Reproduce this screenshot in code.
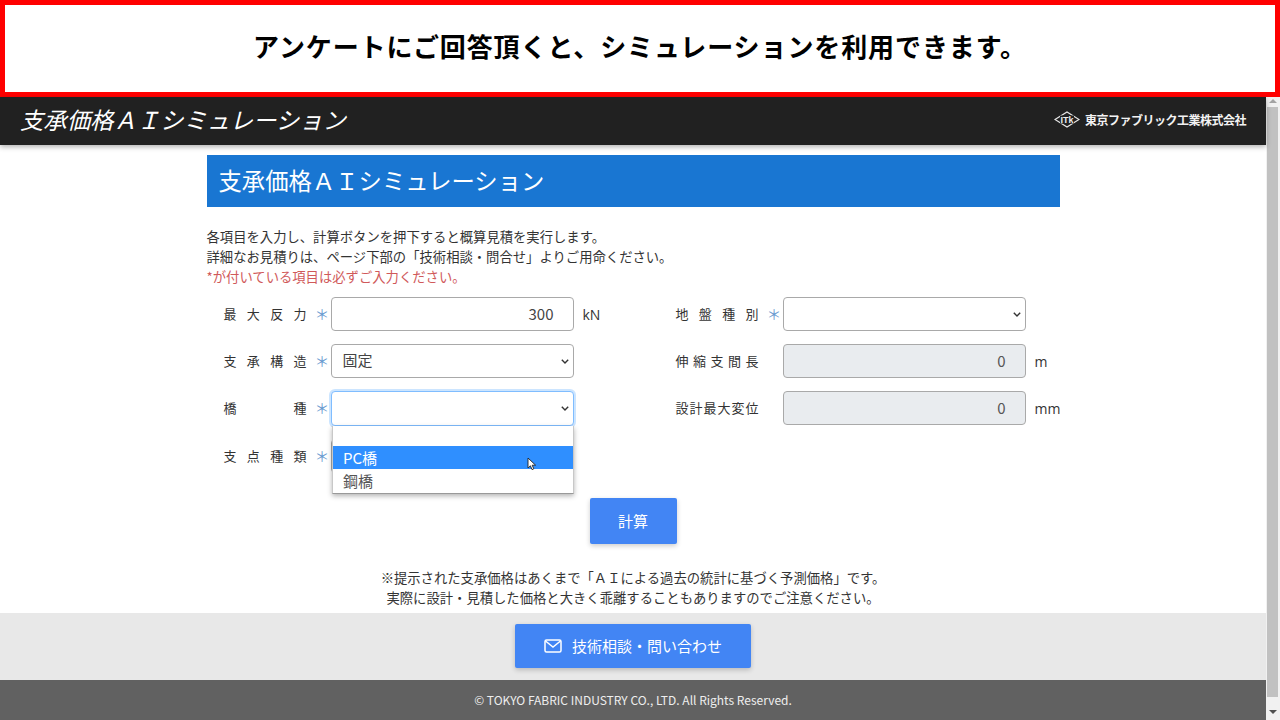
<div class="page">
  <div class="banner"><b>アンケートにご回答頂くと、シミュレーションを利用できます。</b></div>
  <div class="viewport">
    <div class="scroll">
      <header class="topbar">
        <span class="brand">支承価格ＡＩシミュレーション</span>
        <span class="logo">
          <svg width="26" height="17" viewBox="0 0 26 17" aria-hidden="true">
            <path d="M1 8.500 13 1 25 8.500 13 16Z" fill="none" stroke="#e8e8e8" stroke-width="1.200"/>
            <rect x="6" y="4.500" width="14" height="8" fill="#212121"/>
            <text x="13" y="12" text-anchor="middle" class="ftk">ITk</text>
          </svg>
          <span class="company">東京ファブリック工業株式会社</span>
        </span>
      </header>

      <main class="content">
        <h1>支承価格ＡＩシミュレーション</h1>
        <p class="intro">各項目を入力し、計算ボタンを押下すると概算見積を実行します。<br />詳細なお見積りは、ページ下部の「技術相談・問合せ」よりご用命ください。<br /><span class="warn">*が付いている項目は必ずご入力ください。</span></p>

        <div class="form">
          <div class="col">
            <div class="row">
              <span class="label">最大反力</span><span class="star">＊</span>
              <input class="field num" value="300" /><span class="unit">kN</span>
            </div>
            <div class="row">
              <span class="label">支承構造</span><span class="star">＊</span>
              <select class="field"><option>固定</option></select>
            </div>
            <div class="row menu-anchor">
              <span class="label">橋種</span><span class="star">＊</span>
              <select class="field focus"><option></option></select>
              <div class="menu">
                <div class="opt"></div>
                <div class="opt active">PC橋<svg class="cursor" width="10" height="14" viewBox="0 0 10 14"><path d="M1 1v10l2.400-2.200L5 12.600l1.800-.8-1.600-3.600H8.600Z" fill="#fff" stroke="#222" stroke-width=".9"/></svg></div>
                <div class="opt">鋼橋</div>
              </div>
            </div>
            <div class="row">
              <span class="label">支点種類</span><span class="star">＊</span>
              <select class="field"><option></option></select>
            </div>
          </div>
          <div class="col">
            <div class="row">
              <span class="label">地盤種別</span><span class="star">＊</span>
              <select class="field"><option></option></select>
            </div>
            <div class="row">
              <span class="label">伸縮支間長</span><span class="star"></span>
              <input class="field num" disabled value="0" /><span class="unit">m</span>
            </div>
            <div class="row">
              <span class="label">設計最大変位</span><span class="star"></span>
              <input class="field num" disabled value="0" /><span class="unit">mm</span>
            </div>
          </div>
        </div>

        <div class="calc-wrap"><button class="btn calc">計算</button></div>
        <p class="note">※提示された支承価格はあくまで「ＡＩによる過去の統計に基づく予測価格」です。<br />実際に設計・見積した価格と大きく乖離することもありますのでご注意ください。</p>
      </main>

      <section class="contact">
        <button class="btn mail">
          <svg width="18" height="14" viewBox="0 0 18 14" fill="none" stroke="#fff" stroke-width="1.500" aria-hidden="true"><rect x="1" y="1" width="16" height="12" rx="1.500"/><path d="m1.500 2 7.500 6 7.500-6"/></svg>
          技術相談・問い合わせ
        </button>
      </section>
      <footer class="footer">© TOKYO FABRIC INDUSTRY CO., LTD. All Rights Reserved.</footer>
    </div>
    <div class="scrollbar"><span class="arrow up"></span><span class="thumb"></span><span class="arrow down"></span></div>
  </div>
</div>

<style>
  :global(body) { margin: 0; overflow: hidden; background: #fff; }
  .page { width: 1280px; height: 720px; display: flex; flex-direction: column; overflow: hidden; font-family: "Noto Sans CJK JP", "Noto Sans", sans-serif; color: #333; }
  .banner { flex: none; height: 80px; padding-bottom: 7px; box-sizing: content-box; border: 5px solid #f00; display: flex; align-items: center; justify-content: center; background: #fff; font-size: 26px; color: #000; letter-spacing: .9px; }
  .banner b { font-weight: 700; }
  .viewport { flex: 1; display: flex; min-height: 0; }
  .scroll { flex: 1; display: flex; flex-direction: column; min-width: 0; }
  .scrollbar { width: 14px; flex: none; background: #f1f1f1; display: flex; flex-direction: column; align-items: center; }
  .arrow { width: 0; height: 0; border-left: 4px solid transparent; border-right: 4px solid transparent; }
  .up { margin: 2px 0 4px; border-bottom: 4px solid #a3a3a3; }
  .down { margin: 13px 0 0; border-top: 4px solid #505050; }
  .thumb { width: 11px; height: 590px; background: #c1c1c1; align-self: flex-start; margin-left: 1px; }
  .topbar { height: 48px; flex: none; background: #212121; color: #fff; display: flex; align-items: center; justify-content: space-between; padding: 0 20px; box-shadow: 0 2px 5px rgba(0,0,0,.3); position: relative; box-sizing: border-box; }
  .brand { font-size: 23.350px; font-style: italic; font-weight: 400; padding-bottom: 4px; }
  .logo { display: flex; align-items: center; color: #f2f2f2; padding-bottom: 3px; }
  .ftk { font: 700 9px "Liberation Sans", sans-serif; fill: #eee; }
  .company { font-size: 12px; font-weight: 700; margin-left: 5px; letter-spacing: -.5px; }
  .content { width: 853px; margin: 0 auto; flex: none; height: 468px; padding-top: 10px; box-sizing: border-box; }
  h1 { margin: 0; height: 52px; background: #1976d2; color: #fff; font-size: 23.350px; font-weight: 400; line-height: 50px; padding-left: 12px; }
  .intro { margin: 20px 0 0; font-size: 13.330px; line-height: 20px; color: #333; }
  .warn { color: #d0595a; }
  .form { display: flex; margin-top: 10px; height: 201px; }
  .col { width: 469px; flex: none; padding-left: 17px; box-sizing: border-box; }
  .col + .col { width: 384px; padding-left: 0; }
  .row { display: flex; align-items: center; height: 34px; margin-bottom: 13px; font-size: 13px; }
  .menu-anchor { margin-bottom: 14px; position: relative; }
  .label { width: 83px; flex: none; text-align: justify; text-align-last: justify; font-size: 13px; color: #333; padding-bottom: 2px; }
  .star { width: 24px; flex: none; box-sizing: border-box; padding-left: 7px; text-align: center; color: #6a9ad0; font-size: 14.500px; line-height: 34px; }
  .field { width: 243px; height: 34px; box-sizing: border-box; border: 1px solid #a9a9a9; border-radius: 4px; background-color: #fff; font: 400 15px "Noto Sans CJK JP", "Noto Sans", sans-serif; color: #444; flex: none; outline: none; }
  select.field { appearance: none; padding: 0 7px 3px 11px; background-image: url("data:image/svg+xml,%3Csvg xmlns='http://www.w3.org/2000/svg' width='8' height='5' viewBox='0 0 8 5'%3E%3Cpath d='M.8.8 4 4l3.200-3.200' fill='none' stroke='%23333' stroke-width='1.400'/%3E%3C/svg%3E"); background-repeat: no-repeat; background-position: right 4px center; }
  .num { text-align: right; padding: 0 19px 2px 6px; }
  input:disabled { background: #e9ecef; opacity: 1; color: #555; }
  .focus { border-color: #80bdff; box-shadow: 0 0 0 2px rgba(128,189,255,.4); height: 35px; }
  .unit { margin-left: 9px; font-size: 14px; color: #333; font-family: "Open Sans", "Noto Sans", sans-serif; }
  .menu { position: absolute; left: 108.500px; top: 35px; width: 242px; background: #fff; border: 1px solid #c8c8c8; border-top: 0; border-bottom: 1px solid #999; box-shadow: 0 2px 5px rgba(0,0,0,.3); z-index: 2; box-sizing: border-box; }
  .opt { height: 23px; line-height: 23px; padding-left: 10px; font-size: 15px; color: #555; position: relative; }
  .opt:first-child { height: 20px; }
  .opt:last-child { height: 24px; }
  .active { background: #2f8fff; color: #fff; }
  .cursor { position: absolute; left: 194px; top: 11px; }
  .calc-wrap { display: flex; justify-content: center; }
  .btn { border: 0; border-radius: 2px; background: #4285f4; color: #fff; font-family: inherit; box-shadow: 0 2px 5px rgba(0,0,0,.2); }
  .calc { width: 87px; height: 46px; font-size: 15px; padding: 0 0 2px; }
  .note { margin: 24px 0 0; text-align: center; font-size: 13.330px; line-height: 20px; color: #333; }
  .contact { height: 67px; flex: none; background: #e8e8e8; display: flex; align-items: center; justify-content: center; padding-bottom: 2px; box-sizing: border-box; }
  .mail { width: 236px; height: 44px; font-size: 15px; display: flex; align-items: center; justify-content: center; gap: 10px; }
  .footer { height: 40px; flex: none; background: #616161; color: #eee; font-size: 12px; display: flex; align-items: center; justify-content: center; padding-bottom: 2px; box-sizing: border-box; }
</style>
